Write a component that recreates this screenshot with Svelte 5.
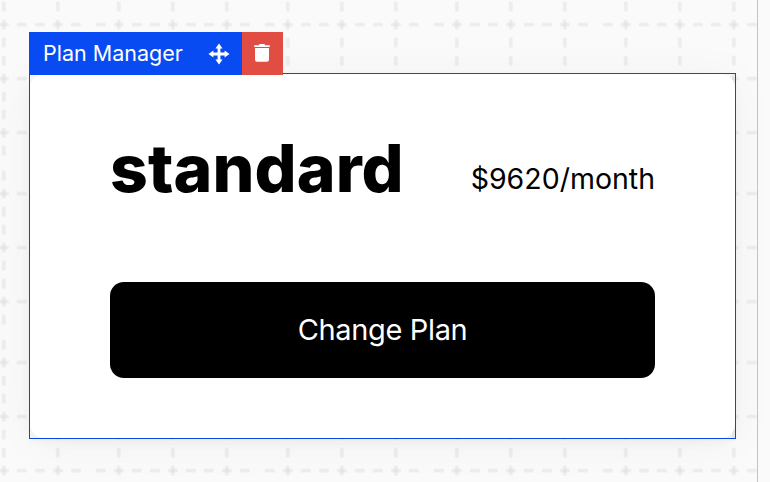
<script>
  const dashes = Array.from({ length: 9 }, (_, i) => 7 + i * 18);
  const lines = [25, 79, 133];
</script>

<div class="canvas">
  <main class="stage">
    <svg class="grid" width="757" height="482" aria-hidden="true">
      <defs>
        <pattern id="dash-grid" x="93.8" y="168.6" width="169" height="169" patternUnits="userSpaceOnUse">
          {#each lines as line}
            {#each dashes as dash}
              <rect x={dash - 5} y={line - 1.8} width="10" height="3.6" rx="1.2" />
              <rect x={line - 1.8} y={dash - 5} width="3.6" height="10" rx="1.2" />
            {/each}
          {/each}
        </pattern>
      </defs>
      <rect class="fill" width="757" height="482" fill="url(#dash-grid)" />
    </svg>

    <div class="selection">
      <div class="toolbar">
        <div class="name">
          <span class="label">Plan Manager</span>
          <svg class="move" width="22" height="22" viewBox="0 0 22 22" aria-hidden="true">
            <path d="M11 .5 14.6 5.4H12.4V9.6H16.6V7.4L21.5 11 16.6 14.6V12.4H12.4V16.6H14.6L11 21.5 7.4 16.6H9.6V12.4H5.4V14.6L.5 11 5.4 7.4V9.6H9.6V5.4H7.4Z" />
          </svg>
        </div>
        <div class="delete">
          <svg width="16" height="18" viewBox="0 0 16 18" aria-hidden="true">
            <path d="M.2 1.2H5L5.5 0H10.5L11 1.2H15.8V3H.2ZM1 4H15V15.8Q15 17.8 13 17.8H3Q1 17.8 1 15.8Z" />
          </svg>
        </div>
      </div>

      <section class="card">
        <div class="summary">
          <h1>standard</h1>
          <span class="price">$9620/month</span>
        </div>
        <button>Change Plan</button>
      </section>
    </div>
  </main>
</div>

<style>
  .canvas {
    box-sizing: border-box;
    width: 770px;
    height: 482px;
    overflow: hidden;
    background: #fafafa;
    font-family: Inter, "Liberation Sans", sans-serif;
  }
  .stage {
    position: relative;
    box-sizing: border-box;
    width: 758px;
    height: 482px;
    padding: 73px 22px 43px 29px;
    border-right: 1px solid #c4c4c4;
  }
  .grid {
    position: absolute;
    top: 0;
    left: 0;
  }
  .grid pattern rect {
    fill: #dcdcdc;
    fill-opacity: 0.45;
  }
  .selection {
    position: relative;
    box-sizing: border-box;
    width: 707px;
    height: 366px;
    border: 1px solid #084bee;
  }
  .toolbar {
    position: absolute;
    top: -42px;
    left: -1px;
    display: flex;
    height: 43px;
  }
  .name {
    display: flex;
    align-items: center;
    box-sizing: border-box;
    width: 213px;
    padding: 0 12px 0 14px;
    justify-content: space-between;
    background: #084bf2;
    color: #fff;
  }
  .label {
    font-size: 21.5px;
    line-height: 43px;
    white-space: nowrap;
  }
  .toolbar svg {
    display: block;
    fill: #fff;
  }
  .delete {
    display: flex;
    align-items: center;
    justify-content: center;
    box-sizing: border-box;
    width: 41px;
    padding: 0 1px 1px 0;
    background: #e14d43;
  }
  .card {
    box-sizing: border-box;
    height: 364px;
    padding: 60px 80px;
    border-radius: 14px;
    background: #fff;
    box-shadow: 0 4px 48px rgba(0, 0, 0, 0.045), 0 4px 12px rgba(0, 0, 0, 0.04);
  }
  .summary {
    display: flex;
    justify-content: space-between;
    height: 148px;
  }
  h1 {
    margin: -2px 0 0;
    font-size: 66px;
    font-weight: 800;
    line-height: 72px;
    letter-spacing: 0.1px;
    color: #000;
  }
  .price {
    margin-top: 25px;
    font-size: 28.5px;
    font-weight: 400;
    line-height: 40px;
    white-space: nowrap;
    color: #000;
  }
  button {
    display: block;
    width: 545px;
    height: 96px;
    padding: 0;
    border: 0;
    border-radius: 14px;
    background: #000;
    color: #fff;
    font: 400 29px/96px Inter, "Liberation Sans", sans-serif;
    letter-spacing: -0.35px;
  }
</style>
